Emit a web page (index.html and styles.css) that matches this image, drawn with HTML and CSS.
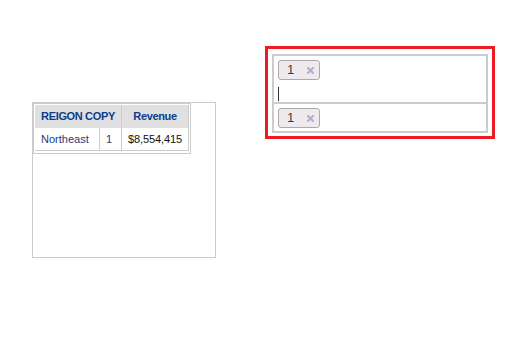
FILE: index.html
```html
<!DOCTYPE html>
<html>
<head>
<meta charset="utf-8">
<link rel="stylesheet" href="styles.css">
</head>
<body>
<div class="canvas">
  <div class="panel">
    <div class="grid-wrap">
      <table class="grid">
        <colgroup>
          <col class="w1">
          <col class="w2">
          <col class="w3">
        </colgroup>
        <thead>
          <tr>
            <th colspan="2">REIGON COPY</th>
            <th>Revenue</th>
          </tr>
        </thead>
        <tbody>
          <tr>
            <td class="dim">Northeast</td>
            <td class="dim">1</td>
            <td class="val">$8,554,415</td>
          </tr>
        </tbody>
      </table>
    </div>
  </div>

  <div class="highlight">
    <div class="selects">
      <div class="sel sel-first">
        <div class="tag"><span class="tag-text">1</span><svg class="tag-x" width="7" height="7" viewBox="0 0 7 7"><path d="M1 1L6 6M6 1L1 6" stroke="#a9b4cd" stroke-width="2" stroke-linecap="square"/></svg></div>
        <div class="search"><span class="caret"></span></div>
      </div>
      <div class="sel sel-second">
        <div class="tag"><span class="tag-text">1</span><svg class="tag-x" width="7" height="7" viewBox="0 0 7 7"><path d="M1 1L6 6M6 1L1 6" stroke="#a9b4cd" stroke-width="2" stroke-linecap="square"/></svg></div>
      </div>
    </div>
  </div>
</div>
</body>
</html>
```

FILE: styles.css
```css
html, body {
  margin: 0;
  padding: 0;
  background: #fff;
  font-family: "Liberation Sans", Arial, sans-serif;
}

.canvas {
  display: flex;
  align-items: flex-start;
  padding-left: 32px;
}

.panel {
  margin-top: 102px;
  width: 184px;
  height: 156px;
  box-sizing: border-box;
  border: 1px solid #cccccc;
}

.grid-wrap {
  width: fit-content;
  border: 1px solid #cccccc;
  padding: 1px 1px 2px 1px;
}

.grid {
  table-layout: fixed;
  width: 154px;
  border-collapse: separate;
  border-spacing: 0;
  font-size: 11px;
}

.w1 { width: 65px; }
.w2 { width: 22px; }
.w3 { width: 67px; }

.grid th,
.grid td {
  padding: 0 0 0 6px;
  height: 22px;
  line-height: 22px;
  border-right: 1px solid #cccccc;
  border-bottom: 1px solid #cccccc;
  white-space: nowrap;
  overflow: visible;
}

.grid th {
  background: #e0e0e0;
  color: #0c3c8c;
  font-weight: bold;
  text-align: center;
  padding: 0;
  letter-spacing: -0.35px;
  border-bottom-color: #e0e0e0;
}

.grid td { text-align: left; }
.dim { color: #1e3c78; }
.val { color: #111; letter-spacing: -0.1px; }

.highlight {
  margin-left: 49px;
  margin-top: 46px;
  width: 230px;
  height: 93px;
  box-sizing: border-box;
  border: 3px solid #ed1c24;
  padding: 5px 4px 3px 4px;
}

.selects {
  border: 2px solid #cccccc;
}

.sel {
  padding: 4px 4px 0 4px;
}

.sel-first {
  border-bottom: 2px solid #cccccc;
}

.sel-second {
  height: 23px;
}

.tag {
  display: flex;
  align-items: center;
  width: 42px;
  height: 20px;
  box-sizing: border-box;
  border: 1px solid #aaaaaa;
  border-radius: 3px;
  background: #eeeaee;
  padding-left: 8px;
}

.tag-text {
  font-size: 13px;
  color: #3a3a3a;
  width: 20px;
  line-height: 18px;
}

.tag-x {
  display: block;
}

.search {
  height: 22px;
  box-sizing: border-box;
  padding-top: 7px;
}

.caret {
  display: block;
  width: 1px;
  height: 14px;
  background: #333;
}
```
